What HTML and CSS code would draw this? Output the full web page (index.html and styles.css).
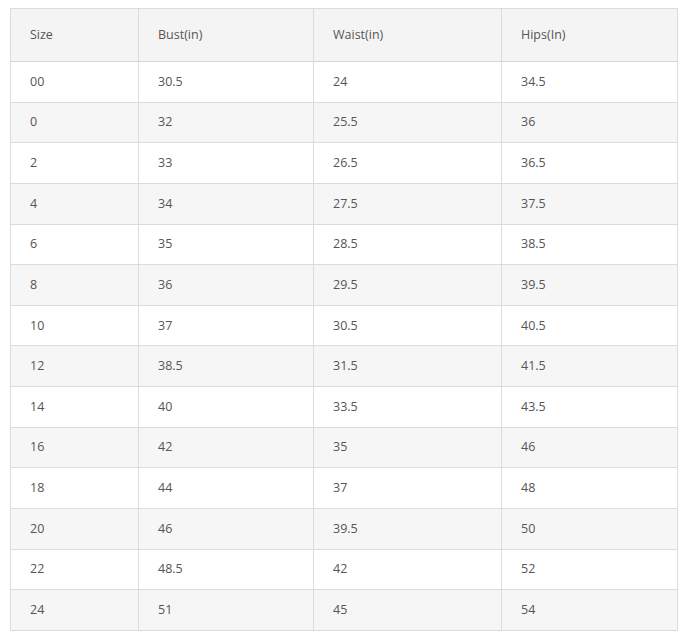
FILE: index.html
```html
<!DOCTYPE html>
<html>
<head>
<meta charset="utf-8">
<link rel="stylesheet" href="styles.css">
</head>
<body>
<table class="size-table">
  <colgroup>
    <col class="c1"><col class="c2"><col class="c3"><col class="c4">
  </colgroup>
  <thead>
    <tr><th>Size</th><th>Bust(in)</th><th>Waist(in)</th><th>Hips(In)</th></tr>
  </thead>
  <tbody>
    <tr><td>00</td><td>30.5</td><td>24</td><td>34.5</td></tr>
    <tr><td>0</td><td>32</td><td>25.5</td><td>36</td></tr>
    <tr><td>2</td><td>33</td><td>26.5</td><td>36.5</td></tr>
    <tr><td>4</td><td>34</td><td>27.5</td><td>37.5</td></tr>
    <tr><td>6</td><td>35</td><td>28.5</td><td>38.5</td></tr>
    <tr><td>8</td><td>36</td><td>29.5</td><td>39.5</td></tr>
    <tr><td>10</td><td>37</td><td>30.5</td><td>40.5</td></tr>
    <tr><td>12</td><td>38.5</td><td>31.5</td><td>41.5</td></tr>
    <tr><td>14</td><td>40</td><td>33.5</td><td>43.5</td></tr>
    <tr><td>16</td><td>42</td><td>35</td><td>46</td></tr>
    <tr><td>18</td><td>44</td><td>37</td><td>48</td></tr>
    <tr><td>20</td><td>46</td><td>39.5</td><td>50</td></tr>
    <tr><td>22</td><td>48.5</td><td>42</td><td>52</td></tr>
    <tr><td>24</td><td>51</td><td>45</td><td>54</td></tr>
  </tbody>
</table>
</body>
</html>
```
FILE: styles.css
```css
html, body {
  margin: 0;
  padding: 0;
  background: #fff;
}
body {
  padding: 8px 0 0 10px;
  font-family: "Open Sans", "Liberation Sans", sans-serif;
  font-size: 12.5px;
  color: #555;
}
.size-table {
  border-collapse: collapse;
  table-layout: fixed;
  width: 667px;
}
.c1 { width: 128px; }
.c2 { width: 175px; }
.c3 { width: 188px; }
.c4 { width: 176px; }
.size-table th,
.size-table td {
  border: 1px solid #dcdcdc;
  padding: 0 0 0 19px;
  text-align: left;
  font-weight: normal;
  vertical-align: middle;
  line-height: 18px;
}
.size-table thead tr {
  height: 53px;
  background: #f4f4f4;
}
.size-table th {
  border-bottom-color: #d6d6d6;
}
.size-table tbody tr {
  height: 40.64px;
}
.size-table tbody tr:nth-child(even) {
  background: #f6f6f6;
}
```
